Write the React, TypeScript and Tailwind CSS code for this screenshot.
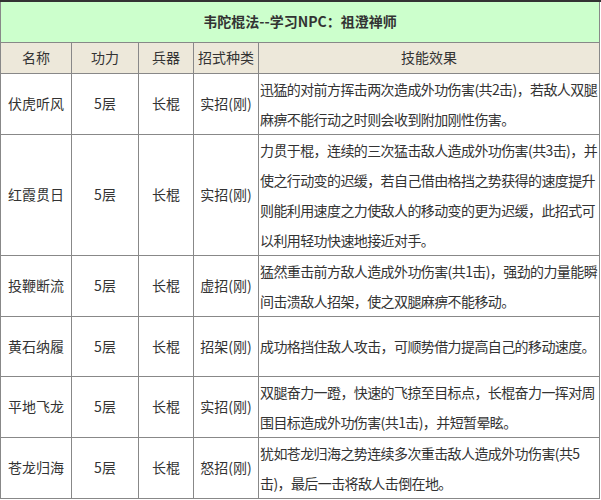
const rows = [
  ["伏虎听风", "5层", "长棍", "实招(刚)", "迅猛的对前方挥击两次造成外功伤害(共2击)，若敌人双腿麻痹不能行动之时则会收到附加刚性伤害。"],
  ["红霞贯日", "5层", "长棍", "实招(刚)", "力贯于棍，连续的三次猛击敌人造成外功伤害(共3击)，并使之行动变的迟缓，若自己借由格挡之势获得的速度提升则能利用速度之力使敌人的移动变的更为迟缓，此招式可以利用轻功快速地接近对手。"],
  ["投鞭断流", "5层", "长棍", "虚招(刚)", "猛然重击前方敌人造成外功伤害(共1击)，强劲的力量能瞬间击溃敌人招架，使之双腿麻痹不能移动。"],
  ["黄石纳履", "5层", "长棍", "招架(刚)", "成功格挡住敌人攻击，可顺势借力提高自己的移动速度。"],
  ["平地飞龙", "5层", "长棍", "实招(刚)", "双腿奋力一蹬，快速的飞掠至目标点，长棍奋力一挥对周围目标造成外功伤害(共1击)，并短暂晕眩。"],
  ["苍龙归海", "5层", "长棍", "怒招(刚)", "犹如苍龙归海之势连续多次重击敌人造成外功伤害(共5击)，最后一击将敌人击倒在地。"],
];
const heights = ["h-[61px]", "h-[121px]", "h-[61px]", "h-[60px]", "h-[61px]", "h-[61px]"];

export default function App() {
  return (
    <div className="w-[601px] h-[500px] bg-white border-t-2 border-[#333] text-[14px] text-[#333]" style={{ fontFamily: '"Microsoft YaHei", "Noto Sans CJK SC", sans-serif' }}>
      <table className="border-collapse table-fixed w-[600px]">
        <colgroup>
          <col className="w-[71px]" />
          <col className="w-[67px]" />
          <col className="w-[55px]" />
          <col className="w-[65px]" />
          <col />
        </colgroup>
        <tbody>
          <tr className="h-[40px] bg-[#ccffcc]">
            <td colSpan={5} className="text-center font-bold border-x border-b border-[#888]">韦陀棍法--学习NPC：祖澄禅师</td>
          </tr>
          <tr className="h-[31px] bg-[#ede8da]">
            {["名称", "功力", "兵器", "招式种类", "技能效果"].map((h) => (
              <td key={h} className="text-center border border-[#888] px-0">{h}</td>
            ))}
          </tr>
          {rows.map((r, i) => (
            <tr key={i} className={heights[i]}>
              {r.slice(0, 4).map((c, j) => (
                <td key={j} className="text-center border border-[#888]">{c}</td>
              ))}
              <td className="border border-[#888] pl-[1px] pr-0 leading-[30px] tracking-[-0.6px] align-middle">{r[4]}</td>
            </tr>
          ))}
        </tbody>
      </table>
    </div>
  );
}
